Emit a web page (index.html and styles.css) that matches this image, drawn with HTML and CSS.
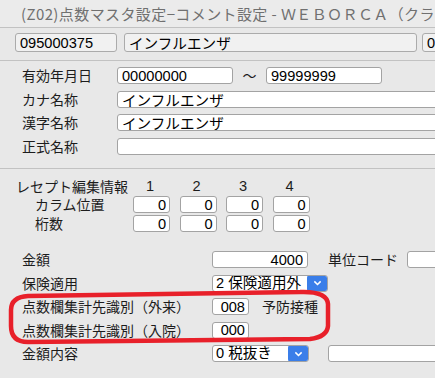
FILE: index.html
```html
<!DOCTYPE html>
<html lang="ja">
<head>
<meta charset="utf-8">
<title>点数マスタ設定</title>
<link rel="stylesheet" href="styles.css">
</head>
<body>
<div class="page">
  <div class="titlebar">(Z02)点数マスタ設定−コメント設定 - ＷＥＢＯＲＣＡ（クラ</div>

  <div class="toprow">
    <input class="fld ro w-code" value="095000375" readonly>
    <input class="fld ro w-name" value="インフルエンザ" readonly>
    <input class="fld ro w-rest" value="0" readonly>
  </div>

  <div class="sec sec1">
    <div class="row">
      <span class="lbl l1">有効年月日</span>
      <input class="fld w-date" value="00000000">
      <span class="tilde">～</span>
      <input class="fld w-date" value="99999999">
    </div>
    <div class="row">
      <span class="lbl l1">カナ名称</span>
      <input class="fld w-long" value="インフルエンザ">
    </div>
    <div class="row">
      <span class="lbl l1">漢字名称</span>
      <input class="fld w-long" value="インフルエンザ">
    </div>
    <div class="row">
      <span class="lbl l1">正式名称</span>
      <input class="fld w-long" value="">
    </div>
  </div>

  <div class="sec sec2">
    <div class="grid">
      <span class="lbl">レセプト編集情報</span>
      <span class="num">1</span><span class="num">2</span><span class="num">3</span><span class="num">4</span>

      <span class="lbl sub">カラム位置</span>
      <input class="fld cell" value="0"><input class="fld cell" value="0"><input class="fld cell" value="0"><input class="fld cell" value="0">

      <span class="lbl sub">桁数</span>
      <input class="fld cell" value="0"><input class="fld cell" value="0"><input class="fld cell" value="0"><input class="fld cell" value="0">
    </div>
  </div>

  <div class="sec sec3">
    <div class="row">
      <span class="lbl l3">金額</span>
      <input class="fld w-amt right" value="4000">
      <span class="lbl unit">単位コード</span>
      <input class="fld w-unit" value="">
    </div>
    <div class="row">
      <span class="lbl l3">保険適用</span>
      <div class="select w-sel1">
        <span class="sel-text">2 保険適用外</span>
        <span class="sel-btn"><svg viewBox="0 0 10 6" width="9" height="6"><path d="M1.5 1.2 L5 4.6 L8.5 1.2" fill="none" stroke="#fff" stroke-width="1.7"/></svg></span>
      </div>
    </div>
    <div class="row">
      <span class="lbl l3">点数欄集計先識別（外来）</span>
      <input class="fld cell" value="008">
      <span class="lbl note">予防接種</span>
    </div>
    <div class="row">
      <span class="lbl l3">点数欄集計先識別（入院）</span>
      <input class="fld cell" value="000">
    </div>
    <div class="row">
      <span class="lbl l3">金額内容</span>
      <div class="select w-sel2">
        <span class="sel-text">0 税抜き</span>
        <span class="sel-btn"><svg viewBox="0 0 10 6" width="9" height="6"><path d="M1.5 1.2 L5 4.6 L8.5 1.2" fill="none" stroke="#fff" stroke-width="1.7"/></svg></span>
      </div>
      <input class="fld w-tail" value="">
    </div>
  </div>

  <svg class="mark" viewBox="0 0 435 378" width="435" height="378">
    <path d="M28 296 L300 292 Q327 291 328 304 L328 326 Q327 337 310 339 L28 342 Q11 342 11 326 L11 310 Q11 297 28 296 Z" fill="none" stroke="#e8202a" stroke-width="4.5" stroke-linejoin="round"/>
  </svg>
</div>
</body>
</html>
```

FILE: styles.css
```css
* { box-sizing: border-box; }

html, body {
  margin: 0;
  padding: 0;
}

body {
  width: 435px;
  height: 378px;
  overflow: hidden;
  background: #e8e8e8;
  font-family: "Noto Sans CJK JP", "Liberation Sans", sans-serif;
  font-size: 14px;
  color: #1c1c1c;
}

.page {
  position: relative;
  width: 435px;
  height: 378px;
  overflow: hidden;
}

.titlebar {
  height: 28px;
  line-height: 27px;
  padding-left: 21px;
  border-bottom: 1px solid #c2c2c2;
  color: #707070;
  font-size: 15px;
  letter-spacing: 0.4px;
  white-space: nowrap;
  overflow: hidden;
  background: #ebebeb;
}

.fld {
  display: block;
  flex: none;
  height: 17px;
  margin: 0;
  padding: 0 3px 0 4px;
  border: 1px solid #a3a3a3;
  border-radius: 3px;
  background: #fff;
  font-family: "Liberation Sans", "Noto Sans CJK JP", sans-serif;
  font-size: 14.6px;
  color: #000;
  outline: none;
}

.fld.ro {
  height: 19px;
  background: #f1f1f1;
  border-color: #ababab;
}

.toprow {
  display: flex;
  gap: 7px;
  padding: 5px 0 0 15px;
  height: 33px;
  border-bottom: 1px solid #c2c2c2;
}

.w-code { width: 102px; }
.w-name { width: 293px; margin-right: -2px; }
.w-rest { width: 60px; }

.sec1 {
  display: flex;
  flex-direction: column;
  gap: 6.5px;
  padding: 6px 0 13.5px 22px;
  border-bottom: 1px solid #c2c2c2;
}

.row {
  display: flex;
  align-items: center;
  height: 17px;
}

.lbl {
  flex: none;
  white-space: nowrap;
  line-height: 17px;
}

.l1 { width: 95px; }

.w-date { width: 116px; }
.tilde {
  width: 33px;
  text-align: center;
  font-size: 14px;
  line-height: 17px;
}
.w-long { width: 340px; }

.sec2 {
  padding: 9px 0 0 16px;
}

.grid {
  display: grid;
  grid-template-columns: 107.5px repeat(4, 37px);
  grid-template-rows: 16px 17px 17px;
  column-gap: 9.5px;
  row-gap: 2px;
  align-items: center;
}

.num {
  text-align: center;
  font-family: "Liberation Sans", sans-serif;
  font-size: 14.6px;
  line-height: 16px;
  padding-right: 3px;
}

.sub { padding-left: 19px; }

.cell {
  width: 37px;
  text-align: right;
  padding-right: 3px;
}

.right { text-align: right; padding-right: 4px; }

.sec3 {
  display: flex;
  flex-direction: column;
  gap: 6.5px;
  padding: 19px 0 0 22px;
}

.l3 { width: 190px; }

.w-amt { width: 96px; }
.unit { margin-left: 20px; width: 79px; }
.w-unit { width: 60px; }

.note { margin-left: 13px; }

.select {
  display: flex;
  flex: none;
  height: 17px;
  border: 1px solid #a3a3a3;
  border-radius: 3px;
  background: #fff;
  overflow: hidden;
}

.sel-text {
  flex: 1;
  min-width: 0;
  overflow: hidden;
  white-space: nowrap;
  padding-left: 3px;
  font-family: "Liberation Sans", "Noto Sans CJK JP", sans-serif;
  font-size: 14.6px;
  line-height: 15px;
  color: #000;
}

.sel-btn {
  flex: none;
  width: 21px;
  margin: -1px -1px -1px 0;
  background: #3a7ee9;
  border-radius: 3px;
  display: flex;
  align-items: center;
  justify-content: center;
}

.w-sel1 { width: 116px; }
.w-sel2 { width: 97px; }

.w-tail { width: 140px; margin-left: 19px; }

.mark {
  position: absolute;
  left: 0;
  top: 0;
  pointer-events: none;
}
```
